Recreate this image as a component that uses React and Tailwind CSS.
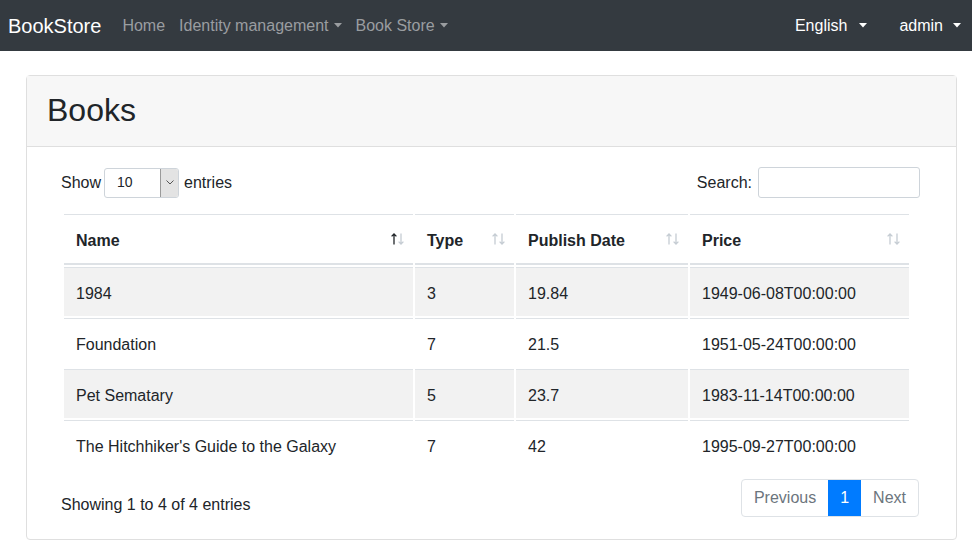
import React from 'react';

const font = { fontFamily: '"Segoe UI", "Liberation Sans", Arial, sans-serif' };

const books = [
  { name: '1984', type: 3, date: '19.84', price: '1949-06-08T00:00:00' },
  { name: 'Foundation', type: 7, date: '21.5', price: '1951-05-24T00:00:00' },
  { name: 'Pet Sematary', type: 5, date: '23.7', price: '1983-11-14T00:00:00' },
  { name: "The Hitchhiker's Guide to the Galaxy", type: 7, date: '42', price: '1995-09-27T00:00:00' },
];

const Caret = ({ className = '' }) => (
  <svg width="8" height="5" viewBox="0 0 8 5" className={className}>
    <path d="M0 0 L8 0 L4 4.5 Z" fill="currentColor" />
  </svg>
);

const SortIcon = ({ active }) => (
  <span className="absolute right-[9px] top-1/2 -translate-y-1/2 flex gap-[1px]">
    <svg width="6" height="12" viewBox="0 0 6 12" className={active ? 'text-[#212529]' : 'text-[#c5ccd3]'}>
      <path d="M3 11.5 V1 M0.6 3.4 L3 1 L5.4 3.4" stroke="currentColor" strokeWidth="1.3" fill="none" />
    </svg>
    <svg width="6" height="12" viewBox="0 0 6 12" className="text-[#c5ccd3]">
      <path d="M3 0.5 V11 M0.6 8.6 L3 11 L5.4 8.6" stroke="currentColor" strokeWidth="1.3" fill="none" />
    </svg>
  </span>
);

const Navbar = () => (
  <nav className="h-[51px] bg-[#343a40] flex items-center pl-2 pr-[11px]">
    <span className="text-white text-[20px] mr-[21px]">BookStore</span>
    <div className="flex items-center text-[16px] text-[#9a9da0]">
      <span className="mr-[14px]">Home</span>
      <span className="flex items-center gap-[5px] mr-[14px]">Identity management <Caret /></span>
      <span className="flex items-center gap-[5px]">Book Store <Caret /></span>
    </div>
    <div className="ml-auto flex items-center text-[16px] text-white">
      <span className="flex items-center gap-[12px] mr-[32px]">English <Caret /></span>
      <span className="flex items-center gap-[10px]">admin <Caret /></span>
    </div>
  </nav>
);

const App = () => {
  const cols = [
    { label: 'Name', w: 'w-[349px]', active: true },
    { label: 'Type', w: 'w-[99px]' },
    { label: 'Publish Date', w: 'w-[172px]' },
    { label: 'Price', w: 'w-[219px]' },
  ];

  return (
    <div className="min-h-screen bg-white text-[#212529]" style={font}>
      <Navbar />

      <div className="ml-[26px] mt-[24px] w-[931px] border border-[#dfdfdf] rounded-[4px]">
        {/* Header */}
        <div className="bg-[#f7f7f7] border-b border-[#dfdfdf] px-5 pt-[15px] pb-[9px]">
          <h2 className="text-[32px] leading-[38px] mb-2">Books</h2>
        </div>

        {/* Body */}
        <div className="pl-[34px] pr-[36px] pt-5 pb-[22px]">
          <div className="flex items-center justify-between h-[30px] text-[16px]">
            <div className="flex items-center pt-[2px]">
              <span>Show</span>
              <div className="ml-[3px] mr-[5px] -mt-[1px] w-[75px] h-[30px] border border-[#ced4da] rounded-[3px] flex items-center overflow-hidden">
                <span className="pl-3 text-[14px] flex-1">10</span>
                <span className="w-[18px] h-full bg-[#e3e3e3] border-l border-[#9a9a9a] flex items-center justify-center">
                  <svg width="8" height="5" viewBox="0 0 8 5">
                    <path d="M0.5 0.5 L4 4 L7.5 0.5" stroke="#555" strokeWidth="1" fill="none" />
                  </svg>
                </span>
              </div>
              <span>entries</span>
            </div>
            <div className="flex items-center">
              <span className="mr-[6px] pt-[2px]">Search:</span>
              <div className="w-[162px] h-[31px] border border-[#ced4da] rounded-[3px]" />
            </div>
          </div>

          <table className="mt-[15px] ml-[1px] w-[849px] border-separate border-spacing-[2px] text-[16px] table-fixed">
            <thead>
              <tr>
                {cols.map((c) => (
                  <th
                    key={c.label}
                    className={`${c.w} relative text-left font-bold border-t border-b-2 border-[#dee2e6] px-3 pt-[14px] pb-[10px] leading-6`}
                  >
                    {c.label}
                    <SortIcon active={c.active} />
                  </th>
                ))}
              </tr>
            </thead>
            <tbody>
              {books.map((b, i) => (
                <tr key={b.name} className={i % 2 === 0 ? 'bg-[#f2f2f2]' : ''}>
                  <td className="border-t border-[#dee2e6] px-3 pt-[14px] pb-[10px] leading-6">{b.name}</td>
                  <td className="border-t border-[#dee2e6] px-3 pt-[14px] pb-[10px] leading-6">{b.type}</td>
                  <td className="border-t border-[#dee2e6] px-3 pt-[14px] pb-[10px] leading-6">{b.date}</td>
                  <td className="border-t border-[#dee2e6] px-3 pt-[14px] pb-[10px] leading-6">{b.price}</td>
                </tr>
              ))}
            </tbody>
          </table>

          <div className="mt-[9px] flex items-start justify-between text-[16px]">
            <span className="pt-[13px] leading-6">Showing 1 to 4 of 4 entries</span>
            <div className="flex h-[38px] -mt-[1px] border border-[#dee2e6] rounded-[4px] overflow-hidden mr-[1px]">
              <span className="px-3 flex items-center text-[#6c757d]">Previous</span>
              <span className="px-3 flex items-center bg-[#007bff] text-white">1</span>
              <span className="px-3 flex items-center text-[#6c757d]">Next</span>
            </div>
          </div>
        </div>
      </div>
    </div>
  );
};

export default App;
